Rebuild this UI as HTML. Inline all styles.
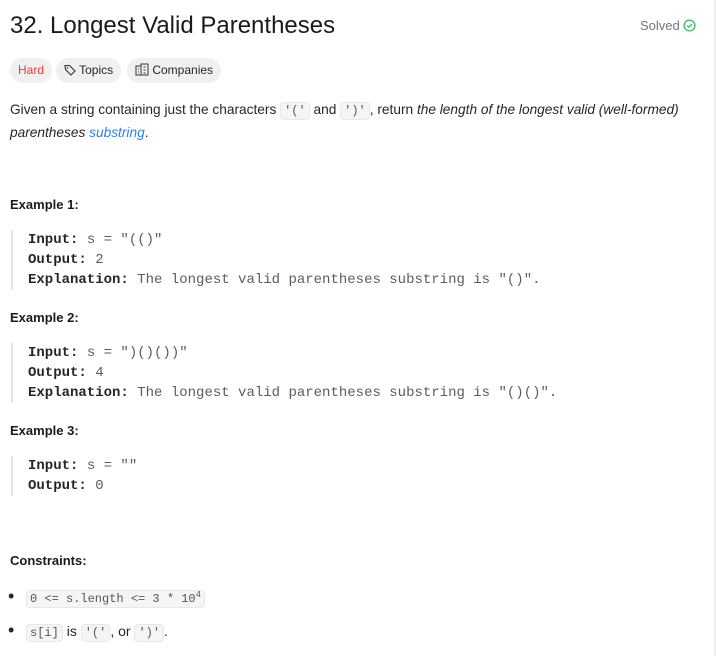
<!DOCTYPE html><html><head><style>
body{margin:0;width:716px;height:656px;background:#fff;font-family:"Liberation Sans",sans-serif;color:#262626;position:relative;overflow:hidden}
.a{position:absolute;white-space:nowrap}
.pre{position:absolute;left:11px;border-left:2px solid #e5e5e5;padding-left:15px;font-family:"Liberation Mono",monospace;font-size:14px;line-height:20px;color:#5c5c5c;white-space:pre}
.pre b{color:#262626}
.c{font-family:"Liberation Mono",monospace;font-size:12px;background:#f5f5f5;border:1px solid #e8e8e8;border-radius:4px;padding:1px 3px;color:#555}
.tag{position:absolute;top:58px;height:25px;border-radius:13px;background:#f0f0f0;font-size:12px;line-height:25px;padding:0 8px}
h4{margin:0;font-size:13px;font-weight:bold;position:absolute;left:10px;color:#1a1a1a}
</style></head><body>
<div class="a" style="left:10px;top:12px;font-size:24px;font-weight:500;color:#1a1a1a">32. Longest Valid Parentheses</div>
<div class="a" style="left:640px;top:18px;font-size:13px;color:#777">Solved <svg width="13" height="13" viewBox="0 0 14 14" style="vertical-align:-2px"><circle cx="7" cy="7" r="5.8" fill="none" stroke="#2cbb5d" stroke-width="1.4"/><path d="M4.5 7.2l1.8 1.7 3.3-3.5" fill="none" stroke="#2cbb5d" stroke-width="1.4"/></svg></div>
<div class="tag" style="left:10px;color:#f63636">Hard</div>
<div class="tag" style="left:56px;padding-left:8px"><svg width="12" height="12" viewBox="0 0 12 12" style="vertical-align:-2px"><path d="M1 1.5h4.5l5.5 5.5-4 4-5.5-5.5z" fill="none" stroke="#333" stroke-width="1.1"/><circle cx="3.6" cy="3.8" r=".8" fill="#333"/></svg> Topics</div>
<div class="tag" style="left:127px"><svg width="14" height="13" viewBox="0 0 14 13" style="vertical-align:-2px"><rect x="1" y="3" width="5" height="9" fill="none" stroke="#333"/><rect x="6" y="1" width="7" height="11" fill="none" stroke="#333"/><path d="M3 6h1M3 9h1M8.5 4h2M8.5 7h2M8.5 10h2" stroke="#333"/></svg> Companies</div>
<div class="a" style="left:10px;top:99px;font-size:13.7px;line-height:21px;white-space:normal;width:690px">Given a string containing just the characters <span class="c">'('</span> and <span class="c">')'</span>, return <i>the length of the longest valid (well-formed) parentheses <span style="color:#2f7cf6">substring</span></i>.</div>
<h4 style="top:197px">Example 1:</h4>
<div class="pre" style="top:230px"><b>Input:</b> s = "(()"
<b>Output:</b> 2
<b>Explanation:</b> The longest valid parentheses substring is "()".</div>
<h4 style="top:310px">Example 2:</h4>
<div class="pre" style="top:343px"><b>Input:</b> s = ")()())"
<b>Output:</b> 4
<b>Explanation:</b> The longest valid parentheses substring is "()()".</div>
<h4 style="top:423px">Example 3:</h4>
<div class="pre" style="top:456px"><b>Input:</b> s = ""
<b>Output:</b> 0</div>
<h4 style="top:553px">Constraints:</h4>
<div class="a" style="left:8px;top:586px;font-size:18px">•</div>
<div class="a" style="left:26px;top:589px;font-size:14px"><span class="c">0 &lt;= s.length &lt;= 3 * 10<sup style="font-size:9px">4</sup></span></div>
<div class="a" style="left:8px;top:620px;font-size:18px">•</div>
<div class="a" style="left:26px;top:623px;font-size:14px"><span class="c">s[i]</span> is <span class="c">'('</span>, or <span class="c">')'</span>.</div>
<div class="a" style="left:714px;top:0;width:2px;height:656px;background:#eee"></div>
</body></html>
